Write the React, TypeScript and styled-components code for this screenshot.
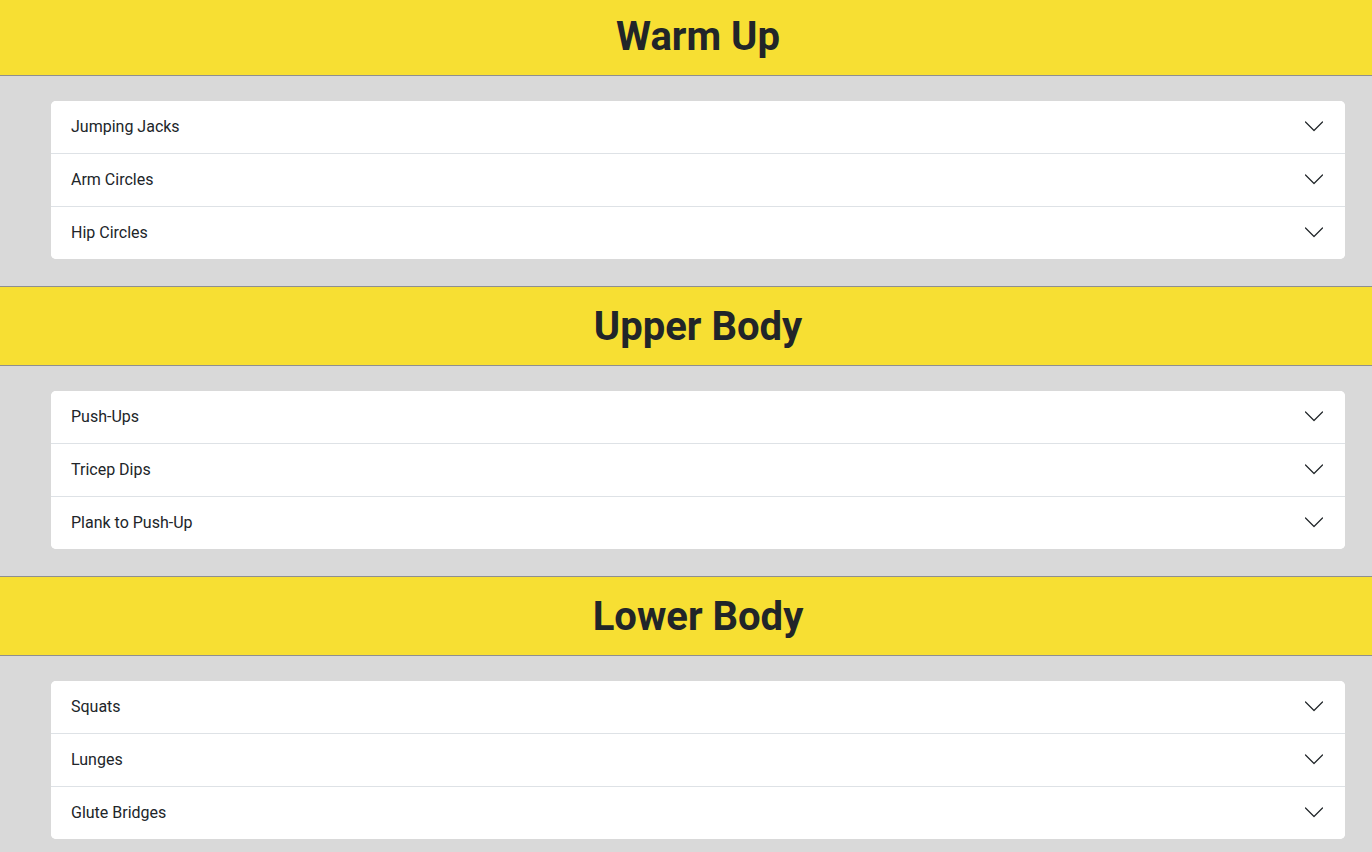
import styled, { createGlobalStyle } from 'styled-components'

const GlobalStyle = createGlobalStyle`
  html, body {
    margin: 0;
    padding: 0;
    background: #d9d9d9;
    font-family: Roboto, "Liberation Sans", sans-serif;
    color: #212529;
  }
`

const sections = [
  { title: 'Warm Up', items: ['Jumping Jacks', 'Arm Circles', 'Hip Circles'] },
  { title: 'Upper Body', items: ['Push-Ups', 'Tricep Dips', 'Plank to Push-Up'] },
  { title: 'Lower Body', items: ['Squats', 'Lunges', 'Glute Bridges'] },
]

const Page = styled.div`
  display: flex;
  flex-direction: column;
  margin-top: -4px;
`

const Header = styled.h2`
  margin: 0;
  height: 78px;
  display: flex;
  align-items: center;
  justify-content: center;
  padding-left: 24px;
  background: #f7df33;
  border-top: 1px solid #8f8f8f;
  border-bottom: 1px solid #8f8f8f;
  font-size: 40px;
  font-weight: 700;
  color: #212529;
`

const Body = styled.div`
  padding: 25px 27px 27px 51px;
`

const Accordion = styled.div`
  background: #fff;
  border-radius: 5px;
  overflow: hidden;
`

const Row = styled.button`
  display: flex;
  width: 100%;
  height: 53px;
  align-items: center;
  justify-content: space-between;
  padding: 0 21px 2px 20px;
  border: none;
  border-top: 1px solid #dee2e6;
  background: #fff;
  font-family: inherit;
  font-size: 16px;
  color: #212529;
  text-align: left;
  cursor: pointer;

  &:first-child {
    border-top: none;
    height: 52px;
  }
`

const Chevron = () => (
  <svg width="20" height="20" viewBox="0 0 20 20" fill="none">
    <path
      d="M1.5 6L10 14.5L18.5 6"
      stroke="#212529"
      strokeWidth="1.2"
      strokeLinecap="round"
      strokeLinejoin="round"
    />
  </svg>
)

export default function App() {
  return (
    <>
      <GlobalStyle />
      <Page>
        {sections.map((s) => (
          <section key={s.title}>
            <Header>{s.title}</Header>
            <Body>
              <Accordion>
                {s.items.map((item) => (
                  <Row key={item}>
                    <span>{item}</span>
                    <Chevron />
                  </Row>
                ))}
              </Accordion>
            </Body>
          </section>
        ))}
      </Page>
    </>
  )
}
